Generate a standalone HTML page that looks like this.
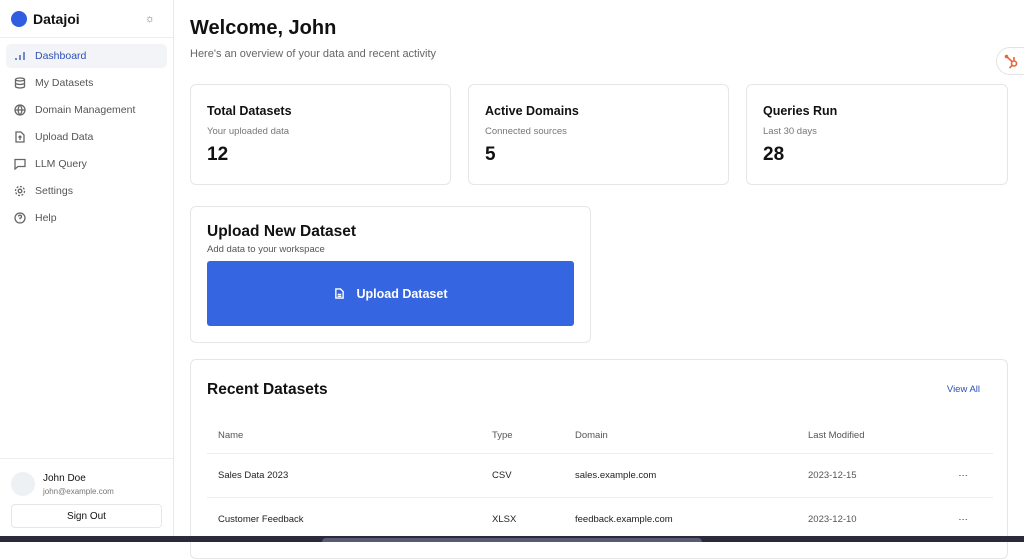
<!DOCTYPE html>
<html><head><meta charset="utf-8"><style>
*{box-sizing:border-box;margin:0;padding:0}
body{width:1024px;height:542px;overflow:hidden;font-family:"Liberation Sans",sans-serif;background:#fff;position:relative;color:#111}
.side{position:absolute;left:0;top:0;width:174px;height:536px;border-right:1px solid #e8e8ea;background:#fff}
.logo{height:38px;border-bottom:1px solid #eee;display:flex;align-items:center;padding-left:11px;font-weight:bold;font-size:14px}
.logo .dot{width:16px;height:16px;border-radius:50%;background:#2f5fe0;margin-right:6px}
.nav{padding:6px 6px}
.it{height:24px;margin-bottom:3px;display:flex;align-items:center;padding-left:8px;font-size:10.5px;color:#555}
.it svg{width:12px;height:12px;margin-right:9px;stroke:#666;fill:none;stroke-width:1.3}
.it.act{background:#f2f4f8;border-radius:5px;color:#2f4fb8}
.it.act svg{stroke:#2f4fb8}
.user{position:absolute;left:0;top:458px;width:173px;border-top:1px solid #eee;padding:13px 11px 0}
.av{width:24px;height:24px;border-radius:50%;background:#eef1f4;position:absolute;left:11px;top:13px}
.un{margin-left:32px;font-size:10px;margin-top:1px}
.ue{margin-left:32px;font-size:8px;color:#777;margin-top:3px}
.so{margin-top:8px;height:24px;border:1px solid #e6e6e6;border-radius:4px;text-align:center;line-height:23px;font-size:10px}
h1{position:absolute;left:190px;top:17px;font-size:20px;font-weight:bold}
.sub{position:absolute;left:190px;top:48px;font-size:11px;color:#666}
.card{position:absolute;border:1px solid #e6e6e8;border-radius:6px;background:#fff}
.card h3{font-size:12.5px;font-weight:bold;margin:19px 0 0 16px;color:#111}
.card .d{font-size:9.5px;color:#777;margin:8px 0 0 16px}
.card .n{font-size:19px;font-weight:bold;margin:7px 0 0 16px}
.btn{position:absolute;left:16px;top:54px;width:367px;height:65px;background:#3565e0;border-radius:3px;color:#fff;font-weight:bold;font-size:12.5px;display:flex;align-items:center;justify-content:center}
table{border-collapse:collapse;position:absolute;left:16px;top:58px;width:786px;font-size:9.5px}
td{height:44px;border-top:1px solid #eee;padding-left:11px;color:#222}
tr.h td{height:35px;border-top:none;color:#555}
.bot{position:absolute;left:0;top:536px;width:1024px;height:6px;background:#2b2a3c;z-index:5}
.tab{position:absolute;left:322px;top:538px;width:380px;height:4px;background:#5b5a75;border-radius:4px 4px 0 0;z-index:6}
</style></head><body>
<div class="side">
<div class="logo"><div class="dot"></div>Datajoi<span style="margin-left:auto;margin-right:18px;font-weight:normal;color:#777;font-size:11px">☼</span></div>
<div class="nav">
<div class="it act"><svg viewBox="0 0 12 12"><path d="M2 10V8M6 10V5M10 10V2"/></svg>Dashboard</div>
<div class="it"><svg viewBox="0 0 12 12"><ellipse cx="6" cy="2.5" rx="4.5" ry="1.5"/><path d="M1.5 2.5v7c0 .8 2 1.5 4.5 1.5s4.5-.7 4.5-1.5v-7M1.5 6c0 .8 2 1.5 4.5 1.5s4.5-.7 4.5-1.5"/></svg>My Datasets</div>
<div class="it"><svg viewBox="0 0 12 12"><circle cx="6" cy="6" r="5"/><path d="M1 6h10M6 1c-2.5 2.8-2.5 7.2 0 10M6 1c2.5 2.8 2.5 7.2 0 10"/></svg>Domain Management</div>
<div class="it"><svg viewBox="0 0 12 12"><path d="M2 1h5l3 3v7H2zM6 9V5M4.5 6.5 6 5l1.5 1.5"/></svg>Upload Data</div>
<div class="it"><svg viewBox="0 0 12 12"><path d="M1 1.5h10v7H4l-3 2.5z"/></svg>LLM Query</div>
<div class="it"><svg viewBox="0 0 12 12"><circle cx="6" cy="6" r="1.8"/><circle cx="6" cy="6" r="4.5" stroke-dasharray="2 1.5"/></svg>Settings</div>
<div class="it"><svg viewBox="0 0 12 12"><circle cx="6" cy="6" r="5"/><path d="M4.5 4.5a1.5 1.5 0 1 1 1.5 1.7v1M6 9v.3"/></svg>Help</div>
</div>
<div class="user"><div class="av"></div><div class="un">John Doe</div><div class="ue">john@example.com</div><div class="so">Sign Out</div></div>
</div>
<h1>Welcome, John</h1>
<div class="sub">Here's an overview of your data and recent activity</div>
<div style="position:absolute;left:996px;top:47px;width:40px;height:28px;border:1px solid #e3e3e3;border-radius:14px;background:#fff"><svg width="16" height="16" viewBox="0 0 16 16" style="position:absolute;left:7px;top:6px" fill="none" stroke="#e8663c" stroke-width="1.6"><circle cx="10" cy="9.5" r="2.5"/><path d="M8 7.5 3 3M10 7V3M8 11.5 5.5 14"/><circle cx="2.5" cy="2.5" r="1" fill="#e8663c"/></svg></div>
<div class="card" style="left:190px;top:84px;width:261px;height:101px"><h3>Total Datasets</h3><div class="d">Your uploaded data</div><div class="n">12</div></div>
<div class="card" style="left:468px;top:84px;width:261px;height:101px"><h3>Active Domains</h3><div class="d">Connected sources</div><div class="n">5</div></div>
<div class="card" style="left:746px;top:84px;width:262px;height:101px"><h3>Queries Run</h3><div class="d">Last 30 days</div><div class="n">28</div></div>
<div class="card" style="left:190px;top:206px;width:401px;height:137px"><h3 style="font-size:15.5px;margin-top:16px">Upload New Dataset</h3><div class="d" style="margin-top:3px;color:#555">Add data to your workspace</div>
<div class="btn"><svg width="11" height="11" viewBox="0 0 12 12" style="margin-right:12px" fill="none" stroke="#fff" stroke-width="1.5"><path d="M2 1h5l3 3v7H2zM4 7h4M4 9h4"/></svg>Upload Dataset</div></div>
<div class="card" style="left:190px;top:359px;width:818px;height:200px"><h3 style="font-size:15.5px;margin-top:21px">Recent Datasets</h3>
<div style="position:absolute;right:27px;top:24px;font-size:9.5px;color:#2f4fb8">View All</div>
<table>
<tr class="h"><td style="width:274px">Name</td><td style="width:83px">Type</td><td style="width:233px">Domain</td><td>Last Modified</td><td></td></tr>
<tr><td>Sales Data 2023</td><td>CSV</td><td>sales.example.com</td><td style="color:#555">2023-12-15</td><td>···</td></tr>
<tr><td>Customer Feedback</td><td>XLSX</td><td>feedback.example.com</td><td style="color:#555">2023-12-10</td><td>···</td></tr>
</table></div>
<div class="bot"></div><div class="tab"></div>
</body></html>
